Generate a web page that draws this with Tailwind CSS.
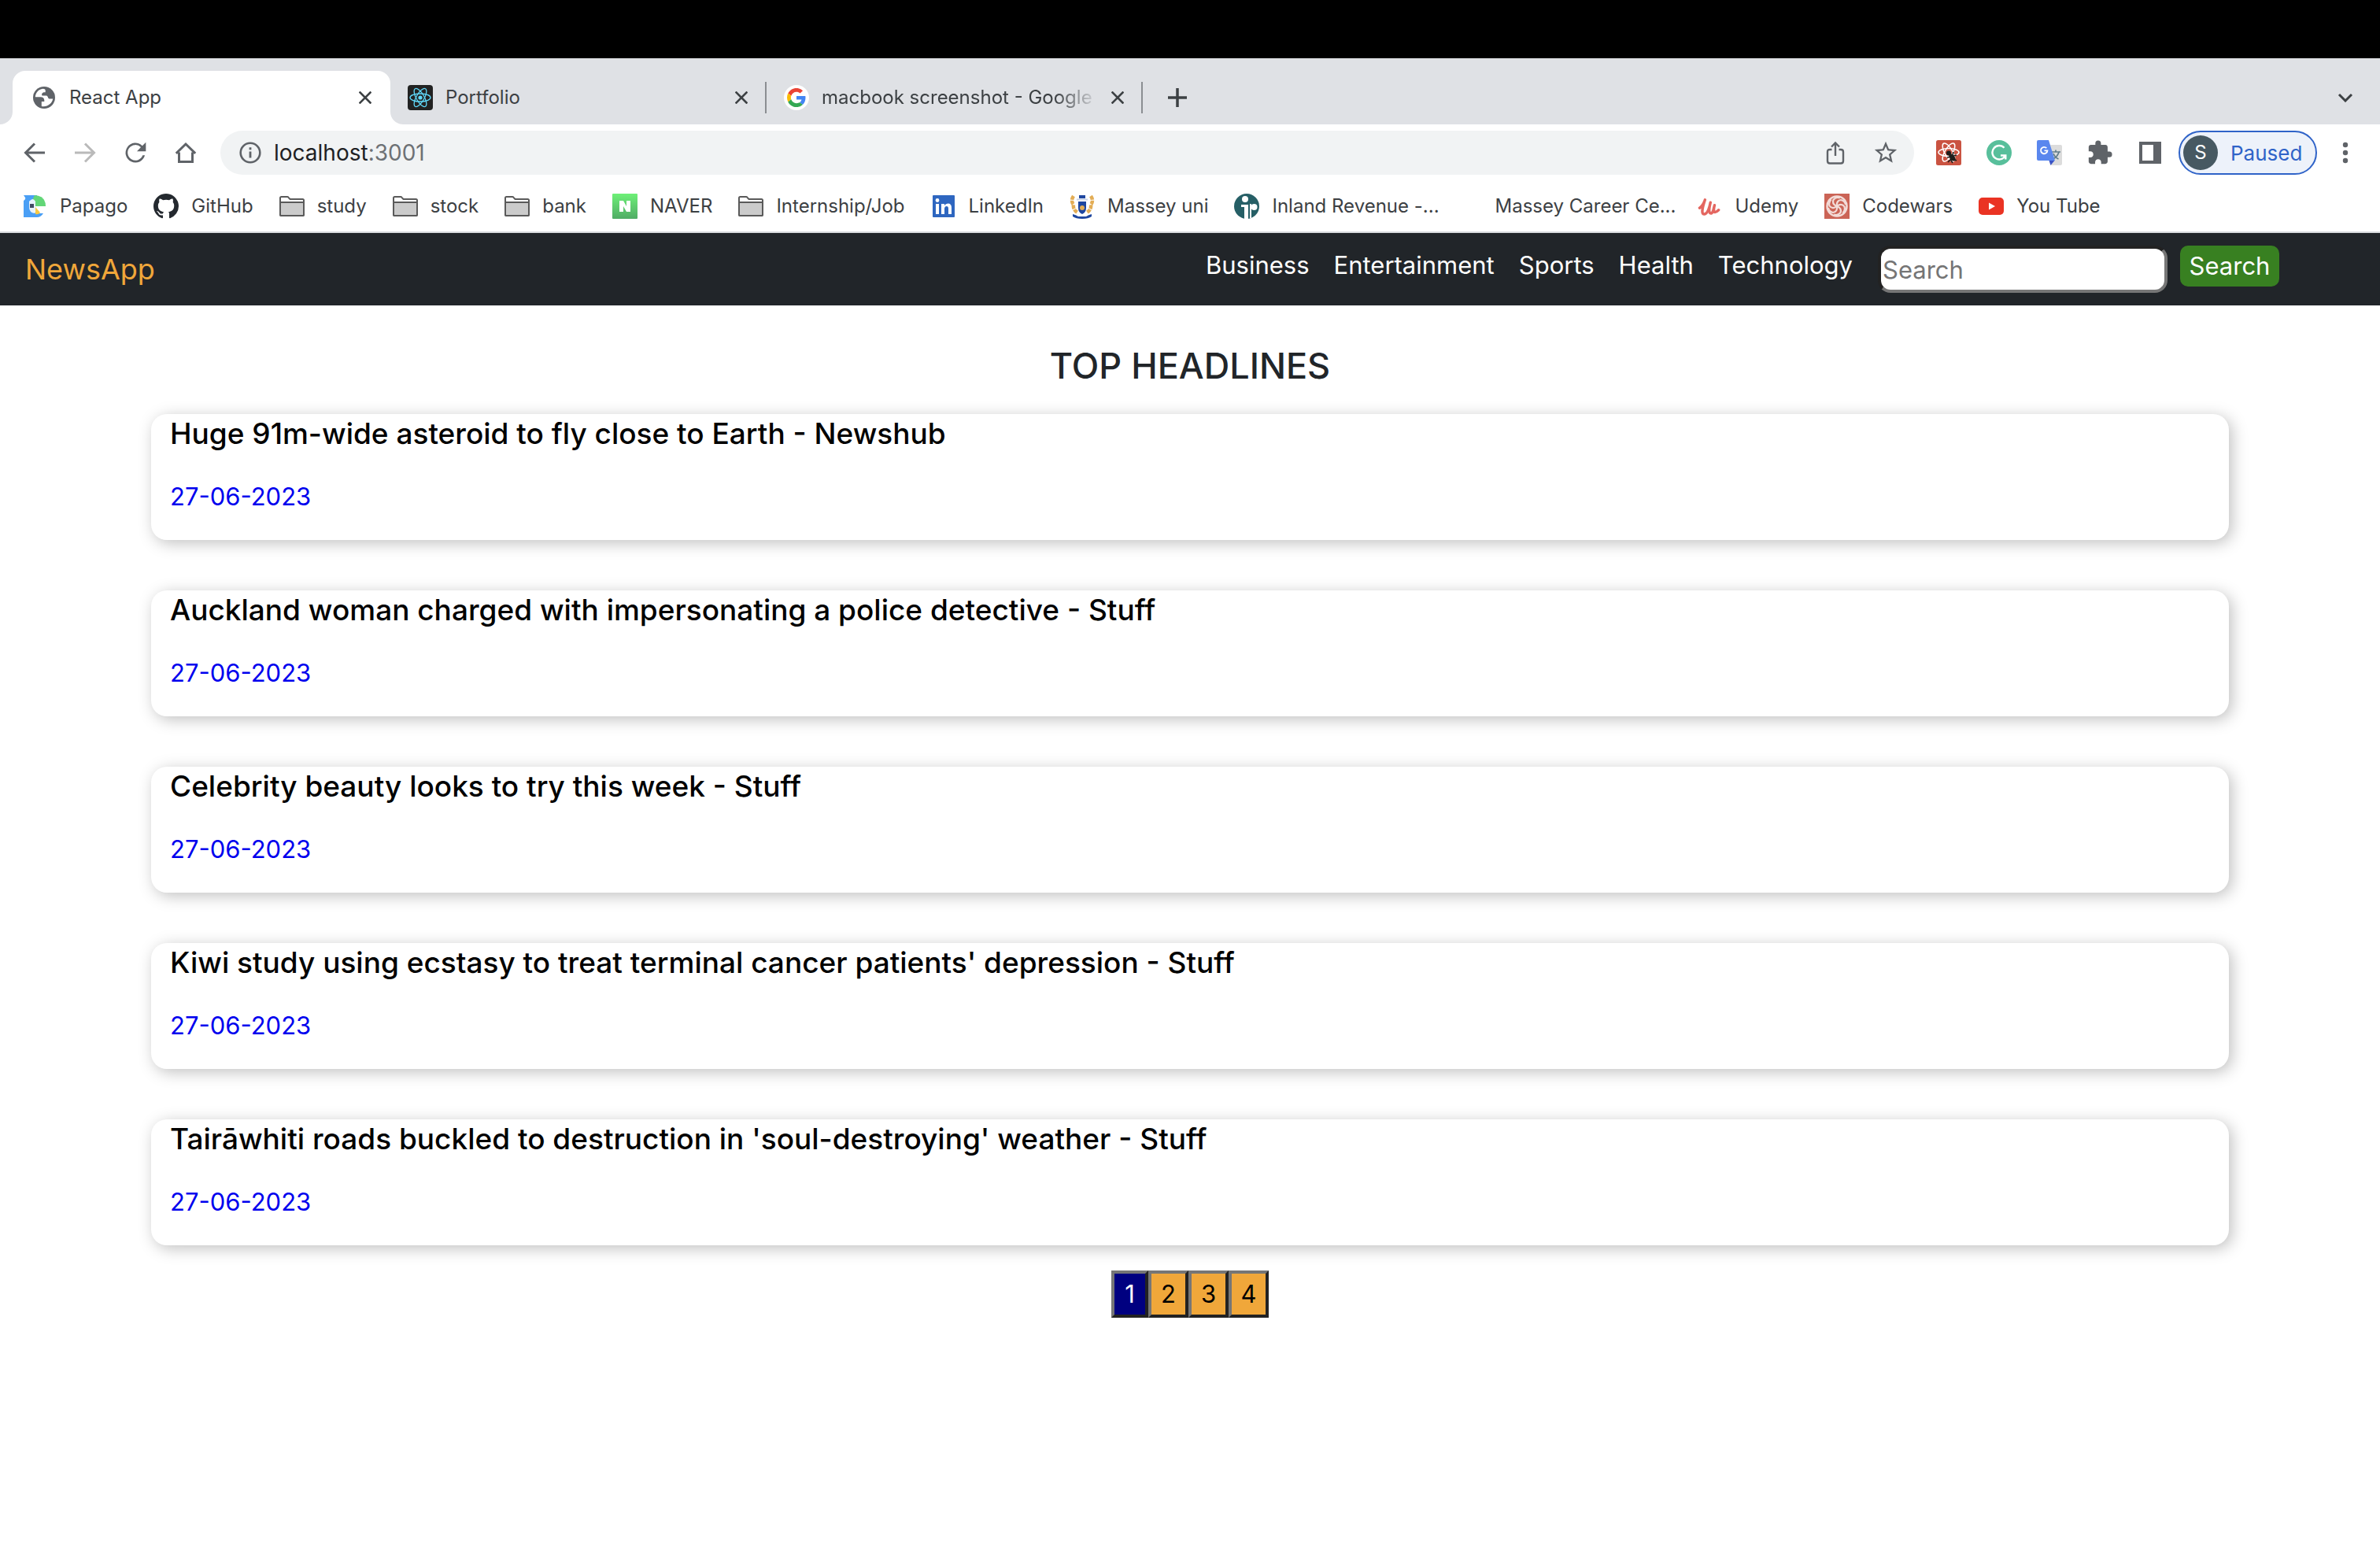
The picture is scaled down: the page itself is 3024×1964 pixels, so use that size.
<!DOCTYPE html>
<html lang="en">
<head>
<meta charset="utf-8">
<title>React App</title>
<script src="https://cdn.jsdelivr.net/npm/@tailwindcss/browser@4"></script>
</head>
<body class="min-h-screen bg-white font-[Inter,sans-serif] text-[#212529]">

<svg class="hidden" aria-hidden="true">
  <symbol id="close" viewBox="0 0 16 16"><path d="M1.5 1.5l13 13M14.500 1.500l-13 13" fill="none" stroke="#3c4043" stroke-width="2.600" stroke-linecap="square"/></symbol>
  <symbol id="folder" viewBox="0 0 32 32">
    <path d="M1 26.500V5.500Q1 4 2.500 4h7.500q1 0 1.500.8L13.500 7H29.500Q31 7 31 8.500v18Q31 28 29.500 28h-27Q1 28 1 26.500z" fill="#fff" stroke="#5a5a5a" stroke-width="2"/>
    <path d="M1 11h30v15.500Q31 28 29.500 28h-27Q1 28 1 26.500z" fill="#cbcbcb" stroke="#5a5a5a" stroke-width="2"/>
  </symbol>
</svg>

<div class="h-[74px] bg-black"></div>

<!-- Tab strip -->
<header>
  <div class="flex h-[84px] items-end bg-[#dfe1e5] px-4 text-[24px] text-[#3c4043]">
    <div class="relative flex h-[68px] w-[480px] items-center gap-4 rounded-t-2xl bg-white px-4 pl-6">
      <svg class="absolute bottom-0 -left-4 size-4" viewBox="0 0 16 16"><path d="M16 0v16H0A16 16 0 0 0 16 0z" fill="#fff"/></svg>
      <svg class="absolute bottom-0 -right-4 size-4" viewBox="0 0 16 16"><path d="M0 0v16h16A16 16 0 0 1 0 0z" fill="#fff"/></svg>
      <svg class="size-8 shrink-0" viewBox="0 0 32 32">
        <circle cx="16" cy="16" r="14" fill="#5f6368"/>
        <path d="M14.500 4.800C8.500 5.500 5 10.500 4.800 15.200h6.700c3 0 4.800 1.600 4.800 4.200v1.600h-3.500v6c7 1.500 13.500-3.500 14.400-9.500h-3.800c-1.600 0-2.200-.8-2.600-2.300-.4-1.400-1.400-1.800-3-1.800h-4.300c-1.200-2.500.8-4.200 3-4.200h1.200V6.600c0-.9-1.500-1.900-3.200-1.800z" fill="#fff"/>
      </svg>
      <span class="flex-1 whitespace-nowrap">React App</span>
      <button class="flex size-8 items-center justify-center" aria-label="Close tab"><svg class="size-4"><use href="#close"/></svg></button>
    </div>
    <div class="-ml-[2px] flex h-[68px] w-[480px] items-center gap-4 pr-4 pl-6">
      <svg class="size-8 shrink-0" viewBox="0 0 32 32">
        <rect width="32" height="32" rx="4" fill="#222"/>
        <g fill="none" stroke="#61dafb" stroke-width="1.300"><ellipse cx="16" cy="16" rx="13" ry="5"/><ellipse cx="16" cy="16" rx="13" ry="5" transform="rotate(60 16 16)"/><ellipse cx="16" cy="16" rx="13" ry="5" transform="rotate(120 16 16)"/></g>
        <circle cx="16" cy="16" r="2.600" fill="#61dafb"/>
      </svg>
      <span class="flex-1 whitespace-nowrap">Portfolio</span>
      <button class="flex size-8 items-center justify-center" aria-label="Close tab"><svg class="size-4"><use href="#close"/></svg></button>
    </div>
    <div class="-ml-[2px] flex h-[68px] w-[480px] items-center">
      <div class="h-10 w-[2px] bg-[#8b8e92]"></div>
      <div class="flex min-w-0 flex-1 items-center pr-[14px] pl-[22px]">
        <svg class="mr-4 size-8 shrink-0" viewBox="0 0 32 32">
          <circle cx="16" cy="16" r="16" fill="#fff"/>
          <g transform="translate(4 4) scale(.5)">
            <path fill="#ea4335" d="M24 9.500c3.540 0 6.710 1.220 9.210 3.600l6.850-6.850C35.900 2.380 30.470 0 24 0 14.620 0 6.510 5.380 2.560 13.220l7.980 6.190C12.430 13.720 17.740 9.500 24 9.500z"/>
            <path fill="#4285f4" d="M46.980 24.550c0-1.570-.15-3.090-.38-4.550H24v9.020h12.940c-.58 2.960-2.260 5.480-4.780 7.180l7.730 6c4.510-4.180 7.090-10.360 7.090-17.650z"/>
            <path fill="#fbbc05" d="M10.530 28.590A14.500 14.500 0 0 1 9.770 24c0-1.600.27-3.140.76-4.590l-7.980-6.190A23.900 23.900 0 0 0 0 24c0 3.880.92 7.540 2.560 10.780l7.970-6.190z"/>
            <path fill="#34a853" d="M24 48c6.480 0 11.930-2.130 15.890-5.810l-7.730-6c-2.150 1.450-4.920 2.300-8.160 2.300-6.260 0-11.570-4.220-13.470-9.910l-7.980 6.190C6.510 42.620 14.620 48 24 48z"/>
          </g>
        </svg>
        <span class="min-w-0 flex-1 overflow-hidden whitespace-nowrap [mask-image:linear-gradient(to_right,#000_84%,transparent)]">macbook screenshot - Google Search</span>
        <button class="ml-2 flex size-8 shrink-0 items-center justify-center" aria-label="Close tab"><svg class="size-4"><use href="#close"/></svg></button>
      </div>
      <div class="h-10 w-[2px] bg-[#8b8e92]"></div>
    </div>
    <button class="ml-4 flex h-[68px] w-14 items-center justify-center" aria-label="New tab"><svg class="size-6" viewBox="0 0 24 24"><path d="M12 0v24M0 12h24" stroke="#3c4043" stroke-width="3.500"/></svg></button>
    <button class="ml-auto flex h-[68px] w-14 items-center justify-center" aria-label="Search tabs"><svg class="h-3 w-5" viewBox="0 0 20 12"><path d="M2 2l8 8 8-8" fill="none" stroke="#3c4043" stroke-width="3"/></svg></button>
  </div>

  <!-- Toolbar -->
  <div class="flex h-[72px] items-center gap-2 bg-white px-4">
    <button class="flex size-14 items-center justify-center" aria-label="Back"><svg class="size-7" viewBox="0 0 28 28"><path d="M27 14H3M14 2.500L2.500 14 14 25.500" fill="none" stroke="#5f6368" stroke-width="3"/></svg></button>
    <button class="flex size-14 items-center justify-center" aria-label="Forward"><svg class="size-7" viewBox="0 0 28 28"><path d="M1 14h24M14 2.500L25.500 14 14 25.500" fill="none" stroke="#bababa" stroke-width="3"/></svg></button>
    <button class="flex size-14 items-center justify-center" aria-label="Reload"><svg class="size-10" viewBox="0 0 24 24"><path fill="#5f6368" d="M17.300 6.700A7.500 7.500 0 1 0 19.260 14h-1.700A5.900 5.900 0 1 1 16.200 7.800L13.200 10.900H20V4z"/></svg></button>
    <button class="flex size-14 items-center justify-center" aria-label="Home"><svg class="size-7" viewBox="0 0 28 28"><path d="M5.500 13.500V25.500H22.500V13.500M1.800 14.800L14 3l12.200 11.800" fill="none" stroke="#5f6368" stroke-width="3"/></svg></button>
    <div class="mr-2 ml-2 flex h-14 flex-1 items-center gap-2 rounded-full bg-[#f1f3f4] pr-2 pl-6">
      <svg class="mr-2 size-7 shrink-0" viewBox="0 0 28 28"><circle cx="14" cy="14" r="12.300" fill="none" stroke="#5f6368" stroke-width="2.600"/><path d="M14 12.500v8M14 7.200v3" stroke="#5f6368" stroke-width="2.800"/></svg>
      <div class="flex-1 text-[28px] text-[#202124]">localhost<span class="text-[#6d7175]">:3001</span></div>
      <button class="flex size-14 items-center justify-center" aria-label="Share"><svg class="h-8 w-6" viewBox="0 0 24 32"><path d="M7.500 12H5q-3 0-3 3v11.500q0 3 3 3h14q3 0 3-3V15q0-3-3-3h-2.500M12 20V4M7 8.500l5-5 5 5" fill="none" stroke="#5f6368" stroke-width="2.400"/></svg></button>
      <button class="flex size-14 items-center justify-center" aria-label="Bookmark"><svg class="size-[34px]" viewBox="0 0 24 24"><path fill="#5f6368" d="M22 9.240l-7.190-.62L12 2 9.190 8.630 2 9.240l5.460 4.730L5.820 21 12 17.270 18.180 21l-1.630-7.030L22 9.240zM12 15.400l-3.760 2.270 1-4.280-3.320-2.880 4.380-.38L12 6.100l1.710 4.040 4.380.38-3.320 2.880 1 4.280L12 15.400z"/></svg></button>
    </div>
    <button class="flex size-14 items-center justify-center" aria-label="React Developer Tools"><svg class="size-8" viewBox="0 0 32 32">
      <rect width="32" height="32" rx="2.500" fill="#ca5341"/>
      <g fill="none" stroke="#fff" stroke-width="1.500"><ellipse cx="16" cy="15.500" rx="13" ry="5"/><ellipse cx="16" cy="15.500" rx="13" ry="5" transform="rotate(60 16 15.500)"/><ellipse cx="16" cy="15.500" rx="13" ry="5" transform="rotate(120 16 15.500)"/></g>
      <circle cx="16" cy="16.500" r="3" fill="#1d1d1b"/><ellipse cx="20.500" cy="22" rx="3" ry="5.500" transform="rotate(-40 20.500 22)" fill="#1d1d1b"/><path d="M14 22l5-1M15 28l4-4M21 19l1-4M22 20l4-1M22 24l4 2M18 24l3 5" stroke="#1d1d1b" stroke-width="1.600"/>
    </svg></button>
    <button class="flex size-14 items-center justify-center" aria-label="Grammarly"><svg class="size-8" viewBox="0 0 32 32"><circle cx="16" cy="16" r="16" fill="#58bf9b"/><path d="M22.500 9.800A8.700 8.700 0 1 0 24 19.500M18 19.500h6.300v5" fill="none" stroke="#fff" stroke-width="2.400"/></svg></button>
    <button class="flex size-14 items-center justify-center" aria-label="Google Translate"><svg class="size-8" viewBox="0 0 32 32">
      <path d="M12 6h18q2 0 2 2v22q0 2-2 2H18z" fill="#dcdcdc"/><path d="M19 15h11M24 12.500V15M28 15q-1.500 6-7.500 9M21 17q2 5 6.500 7" fill="none" stroke="#607d8b" stroke-width="1.700"/>
      <path d="M15.500 26h7L17.500 32z" fill="#3a53c5"/><path d="M2 0h13l8 26H2q-2 0-2-2V2Q0 0 2 0z" fill="#5a87ee"/>
      <path d="M12.300 10.200A4.200 4.200 0 1 0 13.400 13.400H9.500" fill="none" stroke="#fff" stroke-width="1.900"/>
    </svg></button>
    <button class="flex size-14 items-center justify-center" aria-label="Extensions"><svg class="size-[34px]" viewBox="0 0 24 24"><path fill="#5f6368" d="M20.500 11H19V7c0-1.100-.9-2-2-2h-4V3.500a2.500 2.500 0 0 0-5 0V5H4c-1.100 0-1.990.9-1.990 2v3.800H3.500c1.490 0 2.700 1.210 2.700 2.700s-1.210 2.700-2.700 2.700H2V20c0 1.100.9 2 2 2h3.800v-1.500c0-1.490 1.210-2.700 2.700-2.700 1.490 0 2.700 1.210 2.700 2.700V22H17c1.100 0 2-.9 2-2v-4h1.500a2.500 2.500 0 0 0 0-5z"/></svg></button>
    <button class="flex size-14 items-center justify-center" aria-label="Side panel"><svg class="size-7" viewBox="0 0 28 28"><path fill="#5f6368" fill-rule="evenodd" d="M0 0h28v28H0zM4 4v20h14V4z"/></svg></button>
    <button class="flex h-14 w-44 items-center gap-4 rounded-full border-2 border-[#2f63c8] bg-[#edf2fa] pl-1 text-[26px] text-[#2f63c8]">
      <span class="flex size-11 items-center justify-center rounded-full bg-[#475962] text-[24px] text-white">S</span>Paused
    </button>
    <button class="flex size-14 items-center justify-center" aria-label="Menu"><svg class="h-7 w-2" viewBox="0 0 8 28"><g fill="#5f6368"><circle cx="4" cy="4" r="3.200"/><circle cx="4" cy="14" r="3.200"/><circle cx="4" cy="24" r="3.200"/></g></svg></button>
  </div>

  <!-- Bookmarks -->
  <nav class="flex h-[66px] items-center gap-[33px] border-b-2 border-[#d9dbde] bg-white px-7 text-[24px] whitespace-nowrap text-[#3c4043]" aria-label="Bookmarks">
    <a href="#" class="flex items-center gap-4"><svg class="size-8" viewBox="0 0 32 32"><path d="M2 2h17v3q-7 1-9 8 0 7 5 9l2 3h10q-3 5-8 5H2V9q3-2 2-4z" fill="#4a9ff5"/><path d="M16 2Q30 3 30 16H17q-4-4-3-10z" fill="#62d677"/><path d="M9 10q5-6 8 0v9l-1 6q-7-1-7-8z" fill="#e8f2fc"/><rect x="10" y="13" width="5" height="5" fill="#414b63"/><path d="M17 17l6 7q-2 3-6 2z" fill="#f7c844"/></svg>Papago</a>
    <a href="#" class="flex items-center gap-4"><svg class="size-8" viewBox="0 0 16 16"><path fill="#24292f" d="M8 0C3.580 0 0 3.580 0 8c0 3.540 2.290 6.530 5.470 7.590.4.070.55-.17.55-.38 0-.19-.01-.82-.01-1.490-2.010.37-2.530-.49-2.690-.94-.09-.23-.48-.94-.82-1.130-.28-.15-.68-.52-.01-.53.63-.01 1.080.58 1.230.82.72 1.210 1.870.87 2.330.66.070-.52.28-.87.51-1.070-1.780-.2-3.640-.89-3.640-3.950 0-.87.31-1.590.82-2.150-.08-.2-.36-1.020.08-2.120 0 0 .67-.21 2.200.82.64-.18 1.320-.27 2-.27s1.360.09 2 .27c1.530-1.040 2.200-.82 2.200-.82.44 1.100.16 1.920.08 2.120.51.56.82 1.270.82 2.150 0 3.070-1.870 3.750-3.650 3.950.29.25.54.73.54 1.480 0 1.070-.01 1.930-.01 2.200 0 .21.15.46.55.38A8.010 8.010 0 0 0 16 8c0-4.420-3.580-8-8-8z"/></svg>GitHub</a>
    <a href="#" class="flex items-center gap-4"><svg class="size-8"><use href="#folder"/></svg>study</a>
    <a href="#" class="flex items-center gap-4"><svg class="size-8"><use href="#folder"/></svg>stock</a>
    <a href="#" class="flex items-center gap-4"><svg class="size-8"><use href="#folder"/></svg>bank</a>
    <a href="#" class="flex items-center gap-4"><svg class="size-8" viewBox="0 0 32 32"><defs><linearGradient id="nv" x2="0" y2="1"><stop stop-color="#6df077"/><stop offset="1" stop-color="#50ac65"/></linearGradient></defs><rect width="32" height="32" rx="1" fill="url(#nv)"/><path d="M9 9h5l4 7V9h5v14h-5l-4-7v7H9z" fill="#fff"/></svg>NAVER</a>
    <a href="#" class="flex items-center gap-4"><svg class="size-8"><use href="#folder"/></svg>Internship/Job</a>
    <a href="#" class="flex items-center gap-4"><svg class="size-8" viewBox="0 0 32 32"><rect x="2" y="2" width="28" height="28" rx="1" fill="#2e66c0"/><path d="M6 13h4v13H6zM13 13h4v2q1.500-2.500 4.500-2.500Q26 12.500 26 18v8h-4v-7q0-3-2.300-3T17 19v7h-4z" fill="#fff"/><circle cx="8" cy="8.500" r="2.400" fill="#fff"/></svg>LinkedIn</a>
    <a href="#" class="flex items-center gap-4"><svg class="size-8" viewBox="0 0 32 32"><path d="M5 3q-4 6 0 11-1 6 5 10M27 3q4 6 0 11 1 6-5 10" fill="none" stroke="#e3ad55" stroke-width="4.500" stroke-dasharray="5 1"/><path d="M12 2h8v4h-8z" fill="#1f47a0"/><path d="M9 7.500h14" stroke="#c8d2e6" stroke-width="2"/><path d="M11 10h10v8q0 6-5 8-5-2-5-8z" fill="#1f47a0"/><circle cx="16" cy="18" r="3" fill="#e3ad55"/><path d="M4 26q4 1 7 3h10q3-2 7-3v3q-4 3-12 3T4 29z" fill="#1f47a0"/></svg>Massey uni</a>
    <a href="#" class="flex items-center gap-4"><svg class="size-8" viewBox="0 0 32 32"><circle cx="16" cy="16" r="16" fill="#265f66"/><circle cx="14" cy="7" r="4" fill="#fff"/><path d="M9 14h9v18h-5V17H9z" fill="#fff"/><path d="M20 13h2v18h-2z" fill="#fff"/><circle cx="25.500" cy="17" r="4" fill="#fff"/></svg><span class="w-[202px]">Inland Revenue -...</span></a>
    <a href="#" class="flex items-center gap-4"><span class="size-8"></span><span class="w-[224px]">Massey Career Ce...</span></a>
    <a href="#" class="flex items-center gap-4"><svg class="size-8" viewBox="-2 -3 37 37"><path d="M2 18q5-3 8-12-4 12-4 17 0 5 4 4 5-2 8-17-3 12-1 15 3 3 5-3 1-4 2-8-2 8 0 10 2 1 6-3" fill="none" stroke="#e46660" stroke-width="4" stroke-linecap="round" stroke-linejoin="round"/></svg>Udemy</a>
    <a href="#" class="flex items-center gap-4"><svg class="size-8" viewBox="0 0 32 32"><rect width="32" height="32" fill="#cb6456"/><circle cx="16" cy="16" r="12.500" fill="none" stroke="#f3dcd8" stroke-width="2.500"/><g fill="none" stroke="#f3dcd8" stroke-width="2.200"><path id="cw" d="M16 16q-1-7 5-8 5 1 6 6"/><use href="#cw" transform="rotate(60 16 16)"/><use href="#cw" transform="rotate(120 16 16)"/><use href="#cw" transform="rotate(180 16 16)"/><use href="#cw" transform="rotate(240 16 16)"/><use href="#cw" transform="rotate(300 16 16)"/></g></svg>Codewars</a>
    <a href="#" class="flex items-center gap-4"><svg class="size-8" viewBox="0 0 32 32"><rect y="5" width="32" height="22" rx="5" fill="#ea3323"/><path d="M13 11.500l8 4.500-8 4.500z" fill="#fff"/></svg>You Tube</a>
  </nav>
</header>

<!-- App navigation -->
<nav class="flex h-[92px] items-start bg-[#212529] py-4 pr-32 pl-8 text-[31px] text-white">
  <a href="#" class="flex h-[60px] items-center text-[36px] text-[#f0a73a]">NewsApp</a>
  <ul class="ml-auto flex h-[50px] items-center gap-[31px]">
    <li><a href="#">Business</a></li>
    <li><a href="#">Entertainment</a></li>
    <li><a href="#">Sports</a></li>
    <li><a href="#">Health</a></li>
    <li><a href="#">Technology</a></li>
  </ul>
  <form class="ml-8 flex items-start gap-4">
    <input type="search" aria-label="Search" placeholder="Search" class="h-[60px] w-[368px] rounded-2xl border-4 border-t-[#222] border-r-[#767676] border-b-[#767676] border-l-[#222] bg-white px-[2px] text-black placeholder:text-[#757575]">
    <button type="button" class="h-[52px] w-[126px] rounded-[10px] bg-[#388021]">Search</button>
  </form>
</nav>

<main class="px-48 pt-12 pb-16">
  <h1 class="mb-8 text-center text-[45px] leading-[58px] font-medium">TOP HEADLINES</h1>
  <div class="flex flex-col gap-16 text-[31px] leading-[48px] text-[#0000ee]">
    <article class="rounded-[20px] bg-white px-6 pt-px pb-[31px] shadow-[4px_4px_20px_rgba(0,0,0,0.25)]">
      <h2 class="mb-8 text-[37px] font-medium"><a href="#" class="text-black">Huge 91m-wide asteroid to fly close to Earth - Newshub</a></h2>
      <p>27-06-2023</p>
    </article>
    <article class="rounded-[20px] bg-white px-6 pt-px pb-[31px] shadow-[4px_4px_20px_rgba(0,0,0,0.25)]">
      <h2 class="mb-8 text-[37px] font-medium"><a href="#" class="text-black">Auckland woman charged with impersonating a police detective - Stuff</a></h2>
      <p>27-06-2023</p>
    </article>
    <article class="rounded-[20px] bg-white px-6 pt-px pb-[31px] shadow-[4px_4px_20px_rgba(0,0,0,0.25)]">
      <h2 class="mb-8 text-[37px] font-medium"><a href="#" class="text-black">Celebrity beauty looks to try this week - Stuff</a></h2>
      <p>27-06-2023</p>
    </article>
    <article class="rounded-[20px] bg-white px-6 pt-px pb-[31px] shadow-[4px_4px_20px_rgba(0,0,0,0.25)]">
      <h2 class="mb-8 text-[37px] font-medium"><a href="#" class="text-black">Kiwi study using ecstasy to treat terminal cancer patients' depression - Stuff</a></h2>
      <p>27-06-2023</p>
    </article>
    <article class="rounded-[20px] bg-white px-6 pt-px pb-[31px] shadow-[4px_4px_20px_rgba(0,0,0,0.25)]">
      <h2 class="mb-8 text-[37px] font-medium"><a href="#" class="text-black">Tairāwhiti roads buckled to destruction in 'soul-destroying' weather - Stuff</a></h2>
      <p>27-06-2023</p>
    </article>
  </div>
  <div class="mt-8 flex justify-center text-[31px] text-black">
    <button class="h-[60px] w-[47px] border-4 border-t-[#767676] border-r-[#222] border-b-[#222] border-l-[#767676] bg-[#000080] text-white">1</button>
    <button class="h-[60px] w-[51px] border-4 border-t-[#767676] border-r-[#222] border-b-[#222] border-l-[#767676] bg-[#f0a73a]">2</button>
    <button class="h-[60px] w-[51px] border-4 border-t-[#767676] border-r-[#222] border-b-[#222] border-l-[#767676] bg-[#f0a73a]">3</button>
    <button class="h-[60px] w-[51px] border-4 border-t-[#767676] border-r-[#222] border-b-[#222] border-l-[#767676] bg-[#f0a73a]">4</button>
  </div>
</main>
</body>
</html>
